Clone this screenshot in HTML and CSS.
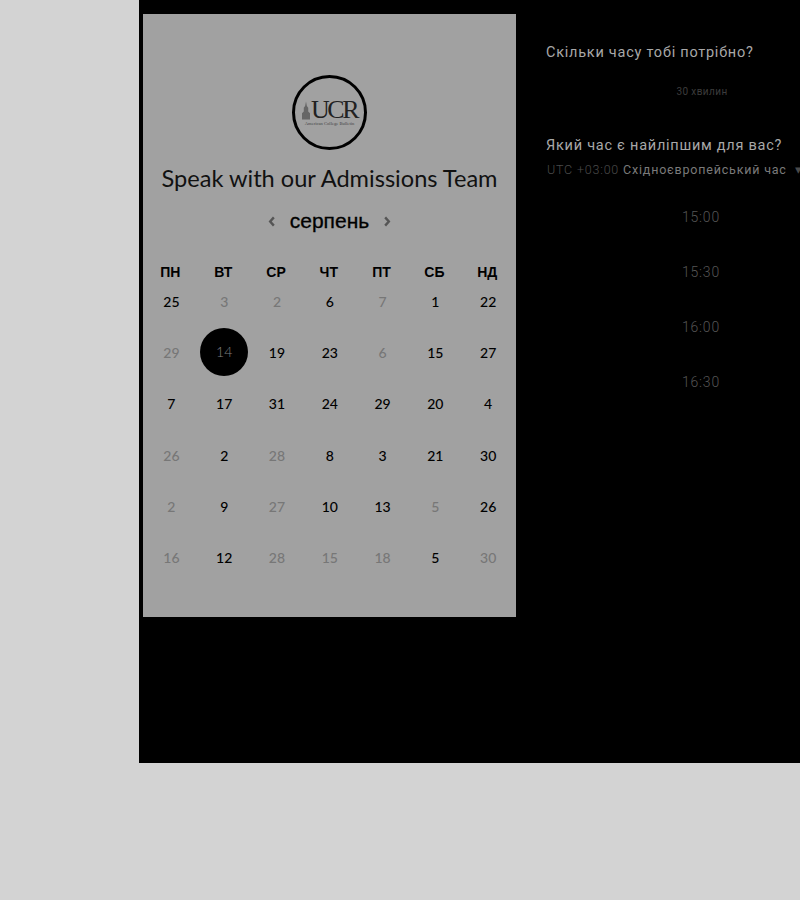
FILE: index.html
```html
<!DOCTYPE html>
<html>
<head>
    <title>Speak with our Admissions Team</title>
    <link rel="stylesheet" href="styles.css">
</head>
<body>

<div class="panel">
    <div class="card">
        <div class="logo">
            <div class="logo-row">
                <svg width="8" height="19" viewBox="0 0 9 20">
                    <path d="M4.5 0 L5.5 5 L7 7 L7 11 L9 13 L9 20 L0 20 L0 13 L2 11 L2 7 L3.5 5 Z" fill="#666"/>
                </svg>
                <span class="logo-name">UCR</span>
            </div>
            <span class="logo-sub">American College Bulletin</span>
        </div>
        <h1>Speak with our Admissions Team</h1>
        <div class="month">
            <svg width="8" height="11" viewBox="0 0 8 12"><path d="M6 1.5 L2 6 L6 10.5" fill="none" stroke="#555" stroke-width="2.6"/></svg>
            <span class="month-name">серпень</span>
            <svg width="8" height="11" viewBox="0 0 8 12"><path d="M2 1.5 L6 6 L2 10.5" fill="none" stroke="#555" stroke-width="2.6"/></svg>
        </div>
        <div class="weekdays">
            <span>ПН</span><span>ВТ</span><span>СР</span><span>ЧТ</span><span>ПТ</span><span>СБ</span><span>НД</span>
        </div>
        <div class="days">
            <span>25</span><span class="off">3</span><span class="off">2</span><span>6</span><span class="off">7</span><span>1</span><span>22</span>
            <span class="off">29</span><span class="selected">14</span><span>19</span><span>23</span><span class="off">6</span><span>15</span><span>27</span>
            <span>7</span><span>17</span><span>31</span><span>24</span><span>29</span><span>20</span><span>4</span>
            <span class="off">26</span><span>2</span><span class="off">28</span><span>8</span><span>3</span><span>21</span><span>30</span>
            <span class="off">2</span><span>9</span><span class="off">27</span><span>10</span><span>13</span><span class="off">5</span><span>26</span>
            <span class="off">16</span><span>12</span><span class="off">28</span><span class="off">15</span><span class="off">18</span><span>5</span><span class="off">30</span>
        </div>
    </div>

    <div class="side">
        <div class="question">Скільки часу тобі потрібно?</div>
        <div class="duration">30 хвилин</div>
        <div class="question">Який час є найліпшим для вас?</div>
        <div class="timezone"><span class="utc">UTC +03:00</span> Східноєвропейський час &nbsp;<span class="utc">▾</span></div>
        <div class="slots">
            <div>15:00</div>
            <div>15:30</div>
            <div>16:00</div>
            <div>16:30</div>
        </div>
    </div>
</div>

</body>
</html>
```

FILE: styles.css
```css
body {
    margin: 0;
    background-color: #d3d3d3;
    height: 900px;
    overflow: hidden;
}
.panel {
    display: flex;
    margin-left: 139px;
    height: 763px;
    padding: 14px 0 0 4px;
    box-sizing: border-box;
    background-color: #000;
    overflow: hidden;
}
.card {
    flex: 0 0 373px;
    height: 603px;
    background-color: #a1a1a1;
    color: #000;
}
.logo {
    display: flex;
    flex-direction: column;
    align-items: center;
    justify-content: center;
    box-sizing: border-box;
    width: 75px;
    height: 75px;
    margin: 61px auto 0;
    border: 3px solid #000;
    border-radius: 50%;
}
.logo-row {
    display: flex;
    align-items: flex-end;
    gap: 1px;
}
.logo-name {
    font-family: "Liberation Serif", serif;
    font-size: 26px;
    line-height: 21px;
    letter-spacing: -2.5px;
    color: #222;
}
.logo-sub {
    margin-top: 1px;
    font-family: "Liberation Serif", serif;
    font-size: 4.6px;
    line-height: 5px;
    color: #444;
    white-space: nowrap;
}
h1 {
    margin: 14px 0 0;
    font-family: Lato, sans-serif;
    font-size: 23.6px;
    font-weight: 400;
    line-height: 28px;
    text-align: center;
    color: #111;
    white-space: nowrap;
}
.month {
    display: flex;
    align-items: center;
    justify-content: center;
    gap: 14px;
    margin-top: 16px;
    height: 26px;
}
.month-name {
    font-family: "Liberation Sans", Arial, sans-serif;
    font-size: 21px;
    -webkit-text-stroke: 0.3px #000;
}
.weekdays, .days {
    display: grid;
    grid-template-columns: repeat(7, 52.8px);
    padding-left: 2px;
    text-align: center;
}
.weekdays {
    margin-top: 29px;
    padding-left: 1px;
    font-family: "Liberation Sans", Arial, sans-serif;
    font-size: 14px;
    font-weight: 700;
    line-height: 18px;
}
.days {
    grid-auto-rows: 51.2px;
    margin-top: -5px;
    font-family: Lato, sans-serif;
    font-size: 14px;
    font-weight: 500;
}
.days span {
    display: flex;
    align-items: center;
    justify-content: center;
}
.days .off {
    color: #777;
}
.days .selected {
    position: relative;
    padding-bottom: 3px;
    box-sizing: border-box;
    font-weight: 300;
    color: #808080;
    z-index: 0;
}
.days .selected::before {
    content: "";
    position: absolute;
    z-index: -1;
    left: 2px;
    top: 1px;
    width: 48px;
    height: 48px;
    border-radius: 50%;
    background-color: #000;
}
.side {
    flex: 0 0 auto;
    margin-left: 30px;
    padding-top: 29px;
    font-family: Roboto, sans-serif;
    white-space: nowrap;
}
.question {
    font-size: 14.5px;
    line-height: 20px;
    letter-spacing: 0.75px;
    color: #a8a8a8;
}
.duration {
    width: 312px;
    margin: 22px 0 37px;
    font-size: 10px;
    line-height: 14px;
    letter-spacing: 0.4px;
    text-align: center;
    color: #3c3c3c;
}
.timezone {
    margin-top: 6px;
    padding-left: 1px;
    font-size: 12.5px;
    line-height: 16px;
    letter-spacing: 0.8px;
    color: #7a7a7a;
}
.utc {
    font-weight: 300;
    color: #4a4a4a;
}
.slots {
    width: 310px;
    margin-top: 29px;
    font-size: 14px;
    font-weight: 300;
    letter-spacing: 0.8px;
    text-align: center;
    color: #555;
}
.slots div {
    height: 55px;
    line-height: 20px;
}
```
